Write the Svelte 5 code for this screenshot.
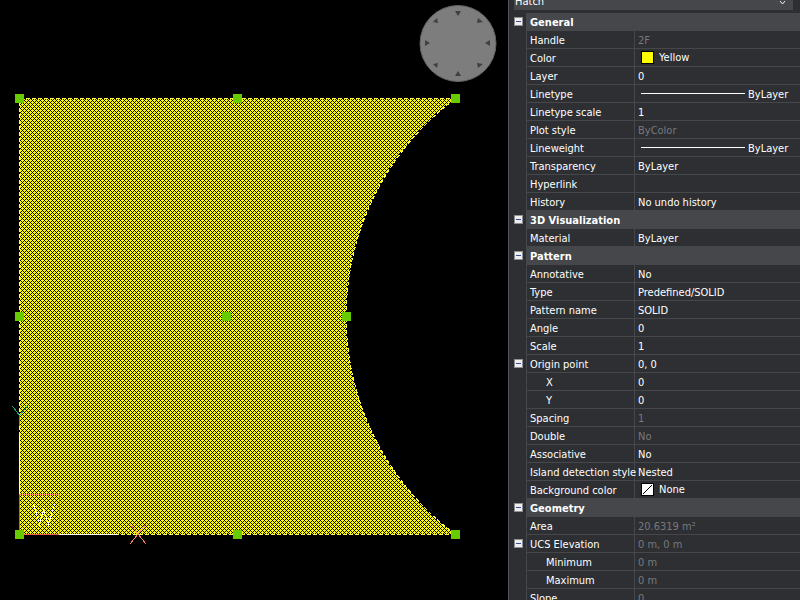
<script>
  const rows = [
    { head: true, label: 'General', group: 'general' },
    { label: 'Handle', value: '2F', off: true, group: 'general' },
    { label: 'Color', value: 'Yellow', swatch: 'yellow', group: 'general' },
    { label: 'Layer', value: '0', group: 'general' },
    { label: 'Linetype', value: 'ByLayer', line: true, group: 'general' },
    { label: 'Linetype scale', value: '1', group: 'general' },
    { label: 'Plot style', value: 'ByColor', off: true, group: 'general' },
    { label: 'Lineweight', value: 'ByLayer', line: true, group: 'general' },
    { label: 'Transparency', value: 'ByLayer', group: 'general' },
    { label: 'Hyperlink', value: '', group: 'general' },
    { label: 'History', value: 'No undo history', group: 'general' },
    { head: true, label: '3D Visualization', group: 'visual' },
    { label: 'Material', value: 'ByLayer', group: 'visual' },
    { head: true, label: 'Pattern', group: 'pattern' },
    { label: 'Annotative', value: 'No', group: 'pattern' },
    { label: 'Type', value: 'Predefined/SOLID', group: 'pattern' },
    { label: 'Pattern name', value: 'SOLID', group: 'pattern' },
    { label: 'Angle', value: '0', group: 'pattern' },
    { label: 'Scale', value: '1', group: 'pattern' },
    { label: 'Origin point', value: '0, 0', group: 'pattern', opens: 'origin' },
    { label: 'X', value: '0', group: 'pattern', sub: 'origin' },
    { label: 'Y', value: '0', group: 'pattern', sub: 'origin' },
    { label: 'Spacing', value: '1', off: true, group: 'pattern' },
    { label: 'Double', value: 'No', off: true, group: 'pattern' },
    { label: 'Associative', value: 'No', group: 'pattern' },
    { label: 'Island detection style', value: 'Nested', group: 'pattern' },
    { label: 'Background color', value: 'None', swatch: 'none', group: 'pattern' },
    { head: true, label: 'Geometry', group: 'geometry' },
    { label: 'Area', value: '20.6319 m²', off: true, group: 'geometry' },
    { label: 'UCS Elevation', value: '0 m, 0 m', off: true, group: 'geometry', opens: 'ucs' },
    { label: 'Minimum', value: '0 m', off: true, group: 'geometry', sub: 'ucs' },
    { label: 'Maximum', value: '0 m', off: true, group: 'geometry', sub: 'ucs' },
    { label: 'Slope', value: '0', off: true, group: 'geometry' }
  ];
  let closed = $state({});
  const shown = $derived(rows.filter((r) => (r.head || !closed[r.group]) && !(r.sub && closed[r.sub])));
  const grips = [[19, 98], [237, 98], [455, 98], [19, 316], [226, 316], [346, 316], [19, 534], [237, 534], [455, 534]];
  const outline = 'M19.5 98.5H455.5A272 272 0 0 0 455.5 534.5H19.5Z';
</script>

{#snippet toggle(key, label)}
  <button class="toggle" aria-label={`Toggle ${label}`} aria-expanded={!closed[key]} onclick={() => (closed[key] = !closed[key])}>
    <svg width="9" height="9" viewBox="0 0 9 9" shape-rendering="crispEdges">
      <rect width="9" height="9" fill="#8f9092" />
      <rect x="1" y="1" width="7" height="7" fill="#eeeeee" />
      <rect x="2" y="4" width="5" height="1" fill="#3c4f9a" />
      {#if closed[key]}<rect x="4" y="2" width="1" height="5" fill="#3c4f9a" />{/if}
    </svg>
  </button>
{/snippet}

<div class="app">
  <main>
    <svg class="drawing" role="img" aria-label="Drawing with a selected hatch">
      <defs>
        <pattern id="dither" width="4" height="4" patternUnits="userSpaceOnUse">
          <rect width="4" height="4" fill="#ffff00" />
          <path d="M0 0h1v1H0zM1 1h1v1H1zM3 1h1v1H3zM2 2h1v1H2zM1 3h1v1H1zM3 3h1v1H3z" fill="#000" />
        </pattern>
      </defs>
      <g shape-rendering="crispEdges" fill="none">
        <path d={outline} fill="url(#dither)" />
        <path d={outline} stroke="#000" />
        <path d={outline} stroke="#ffff50" stroke-dasharray="4 2" />
        <path d="M19.5 436V494M59 534.5H118" stroke="#fff" />
        <path d="M19.5 494V534M59.5 494V534" stroke="#18ad70" />
        <path d="M19 494.5H60" stroke="#ff7777" />
        <path d="M19 534.5H59" stroke="#f05f4c" />
        <path d="M12.5 406L19.5 415.5L27.5 406M19.5 415V426" stroke="#18ad70" />
        <path d="M130 524L146 544M146 524L130 544" stroke="#ff8068" />
        <path d="M33.5 504L39.5 524L43.5 510L48.5 524L54.5 504" stroke="#fff" />
      </g>
      <circle cx="458" cy="43.5" r="38" fill="#7d7d7d" stroke="#626262" />
      <g fill="#404040">
        <path d="M455 11h6l-3 5zM455 76h6l-3-5zM425 40v6l5-3zM490 40v6l-5-3z" />
        <path d="M437 18l1 5-5-1zM478 18l-1 5 6-1zM437 68l1-5-5 1zM478 68l-1-5 6 1z" />
      </g>
      {#each grips as [x, y]}
        <rect x={x - 4} y={y - 4} width="9" height="9" fill="#66cc00" />
      {/each}
    </svg>
  </main>

  <aside>
    <div class="picker">
      <select aria-label="Entity type"><option>Hatch</option></select>
      <svg width="7" height="7" viewBox="0 0 7 7"><path d="M1 1L3.500 4L6 1" fill="none" stroke="#f0f0f0" /></svg>
    </div>
    <table>
      <colgroup><col class="gutter" /><col class="names" /><col /></colgroup>
      <tbody>
        {#each shown as r (r.label)}
          {#if r.head}
            <tr class="head">
              <td class="side">{@render toggle(r.group, r.label)}</td>
              <th colspan="2" scope="rowgroup">{r.label}</th>
            </tr>
          {:else}
            <tr>
              <td class="side">{#if r.opens}{@render toggle(r.opens, r.label)}{/if}</td>
              <th scope="row" class:sub={r.sub}><label for={r.label}>{r.label}</label></th>
              <td class="value">
                <div class="cell">
                  {#if r.swatch}
                    <svg class="swatch" width="13" height="13" viewBox="0 0 13 13">
                      <rect x=".5" y=".5" width="12" height="12" fill={r.swatch === 'none' ? '#fff' : '#ff0'} stroke="#000" />
                      {#if r.swatch === 'none'}<path d="M2 11L11 2" stroke="#000" />{/if}
                    </svg>
                  {/if}
                  {#if r.line}<span class="line"></span>{/if}
                  <input id={r.label} class:plain={!r.swatch} value={r.value} disabled={r.off} />
                </div>
              </td>
            </tr>
          {/if}
        {/each}
      </tbody>
    </table>
  </aside>
</div>

<style>
  :global(body) { margin: 0; background: #000; }
  .app {
    display: flex;
    height: 100vh;
    overflow: hidden;
    background: #000;
    font: 11px/15px "DejaVu Sans Condensed", Tahoma, sans-serif;
    color: #fff;
  }
  main { flex: 1; min-width: 0; }
  .drawing { display: block; width: 100%; height: 100%; }
  aside {
    flex: 0 0 291px;
    overflow: hidden;
    background: #2d2f33;
    border-left: 1px solid #55575b;
  }
  .picker {
    display: flex;
    align-items: flex-end;
    height: 10px;
    margin: 0 7px 3px 5px;
    padding-right: 7px;
    background: #45474b;
    overflow: hidden;
  }
  select {
    flex: 1;
    appearance: none;
    height: 18px;
    padding: 0 1px;
    border: 0;
    background: none;
    font: inherit;
    color: inherit;
  }
  .picker svg { margin-bottom: 3px; }
  table { width: 100%; table-layout: fixed; border-collapse: separate; border-spacing: 0; }
  .gutter { width: 17px; }
  .names { width: 108px; }
  tr { height: 18px; }
  td, th {
    box-sizing: border-box;
    height: 18px;
    padding: 0;
    text-align: left;
    font-weight: normal;
    white-space: nowrap;
  }
  th, .value { border-left: 1px solid #45474b; border-bottom: 1px solid #45474b; }
  th { padding: 2px 0 0 3px; }
  th.sub { padding-left: 19px; }
  .head th { background: #45474b; font-weight: bold; }
  .side { padding: 4px 0 0 5px; line-height: 0; vertical-align: top; }
  label { display: block; }
  .toggle { display: block; padding: 0; border: 0; background: none; line-height: 0; }
  .cell { display: flex; align-items: center; height: 17px; padding-left: 3px; }
  .swatch { flex: none; margin: 0 5px 0 3px; }
  .line { flex: none; width: 104px; height: 1px; margin: 0 3px; background: #fff; }
  input {
    flex: 1;
    min-width: 0;
    height: 15px;
    padding: 0;
    border: 0;
    background: none;
    font: inherit;
    color: inherit;
  }
  .plain { margin-top: 2px; }
  input:disabled { color: #77797c; }
</style>
